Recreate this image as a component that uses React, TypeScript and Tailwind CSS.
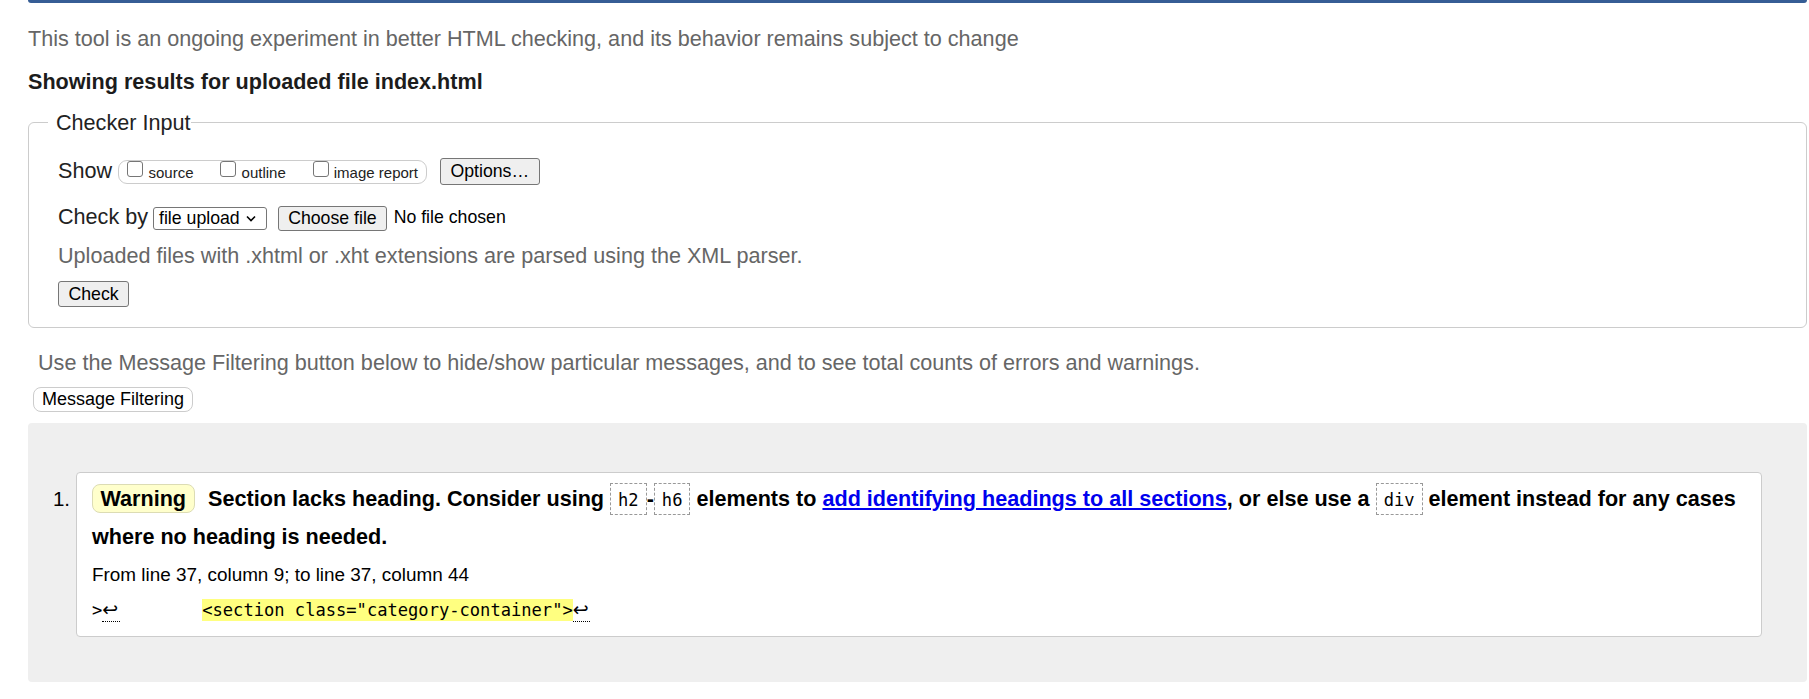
import React from 'react';

const Checkbox: React.FC = () => (
  <span className="block h-[16px] w-[16px] shrink-0 rounded-[3px] border border-[#767676] bg-white" />
);

const Code: React.FC<{ children: React.ReactNode }> = ({ children }) => (
  <code className="inline-block border border-dashed border-[#999] px-[7px] pt-[6.5px] pb-[3.5px] text-[17.1px] font-normal leading-[20px] [font-family:'DejaVu_Sans_Mono',monospace]">
    {children}
  </code>
);

const LineBreak: React.FC = () => (
  <span className="inline-block w-[17.6px] border-b border-dotted border-black pb-[1px] text-[19px] leading-[21px] [font-family:'DejaVu_Sans',sans-serif]">↩</span>
);

export default function App() {
  return (
    <div className="min-h-screen bg-white pl-[28px] pr-[2px] text-[#222] [font-family:'Liberation_Sans',Arial,sans-serif]">
      <div className="h-[3px] rounded-b-[6px] bg-[#365d95]" />

      <p className="mt-[23px] text-[21.6px] leading-[25px] text-[#666]">
        This tool is an ongoing experiment in better HTML checking, and its behavior remains subject to change
      </p>
      <p className="mt-[18px] text-[21.6px] font-bold leading-[25px] text-[#1c1c1c]">
        Showing results for uploaded file index.html
      </p>

      <fieldset className="mt-[16px] rounded-[6px] border border-[#ccc]">
        <legend className="ml-[19px] pl-[8px] pr-[1px] text-[21.6px] leading-[25px] text-[#222]">Checker Input</legend>
        <div className="pl-[29px] pt-[23px] pb-[20px]">
          <div className="flex h-[27px] items-start">
            <span className="text-[21.6px] leading-[25px]">Show</span>
            <div className="ml-[6px] mt-[2px] flex h-[24px] items-start rounded-[9px] border border-[#ccc] px-[8px]">
              <Checkbox />
              <span className="ml-[5.5px] mt-[2.5px] text-[15px] leading-[18px]">source</span>
              <span className="ml-[26.5px]"><Checkbox /></span>
              <span className="ml-[5.5px] mt-[2.5px] text-[15px] leading-[18px]">outline</span>
              <span className="ml-[27px]"><Checkbox /></span>
              <span className="ml-[5px] mt-[2.5px] text-[15px] leading-[18px]">image report</span>
            </div>
            <button className="ml-[13px] h-[27px] rounded-[3px] border border-[#767676] bg-[#efefef] px-[9.5px] text-[17.7px] leading-[25px] text-black">
              Options…
            </button>
          </div>

          <div className="mt-[19px] flex items-start">
            <span className="text-[21.6px] leading-[25px]">Check by</span>
            <div className="ml-[4.5px] mt-[2.5px] flex h-[23px] items-center rounded-[3px] border border-[#767676] bg-white pl-[5.5px] pr-[10px]">
              <span className="text-[17.7px] leading-[21px] text-black">file upload</span>
              <svg className="ml-[6px]" width="10" height="7" viewBox="0 0 10 7">
                <path d="M1 1.5 L5 5.5 L9 1.5" fill="none" stroke="#000" strokeWidth="1.6" />
              </svg>
            </div>
            <button className="ml-[11px] mt-[2px] h-[25px] rounded-[3px] border border-[#767676] bg-[#efefef] px-[9.5px] text-[17.7px] leading-[23px] text-black">
              Choose file
            </button>
            <span className="ml-[6.5px] mt-[3.4px] text-[17.7px] leading-[21px] text-black">No file chosen</span>
          </div>

          <p className="mt-[12.3px] text-[21.6px] leading-[25px] text-[#666]">
            Uploaded files with .xhtml or .xht extensions are parsed using the XML parser.
          </p>

          <div className="mt-[12.7px] flex">
            <button className="h-[26px] rounded-[3px] border border-[#767676] bg-[#efefef] px-[9.5px] text-[17.7px] leading-[24px] text-black">
              Check
            </button>
          </div>
        </div>
      </fieldset>

      <p className="ml-[10px] mt-[22px] text-[21.6px] leading-[25px] text-[#666]">
        Use the Message Filtering button below to hide/show particular messages, and to see total counts of errors and warnings.
      </p>
      <div className="ml-[5px] mt-[12.5px] flex">
        <button className="h-[25px] rounded-[8px] border border-[#ccc] bg-white px-[8px] text-[18px] leading-[23px] text-black">
          Message Filtering
        </button>
      </div>

      <div className="mt-[10.5px] rounded-[4px] bg-[#efefef] pt-[48.7px] pb-[45px] pr-[45.3px]">
        <div className="flex items-baseline">
          <span className="w-[48px] shrink-0 pr-[6px] text-right text-[20.5px] text-black">1.</span>
          <div className="flex-1 rounded-[4px] border border-[#ccc] bg-white px-[15px] pt-[7.4px] pb-[13.9px] text-black">
            <p className="text-[21.6px] font-bold leading-[38.3px]">
              <span className="mr-[13.5px] inline-block rounded-[8px] border border-[#dcdcb4] bg-[#ffffcc] px-[7.5px] py-[0.7px] leading-[25px]">
                Warning
              </span>
              Section lacks heading. Consider using <Code>h2</Code>-<Code>h6</Code> elements to{' '}
              <a className="text-[#0000ee] underline" href="#">add identifying headings to all sections</a>, or else use a{' '}
              <Code>div</Code> element instead for any cases where no heading is needed.
            </p>
            <p className="mt-[7.45px] text-[18.9px] leading-[22px]">From line 37, column 9; to line 37, column 44</p>
            <p className="mt-[12.9px] whitespace-pre text-[17.1px] leading-[22px] [font-family:'DejaVu_Sans_Mono',monospace]">
              <span>&gt;</span>
              <LineBreak />
              {'        '}
              <span className="bg-[#ffff80] pt-[0.8px] pb-[0.9px]">&lt;section class="category-container"&gt;</span>
              <LineBreak />
            </p>
          </div>
        </div>
      </div>
    </div>
  );
}
